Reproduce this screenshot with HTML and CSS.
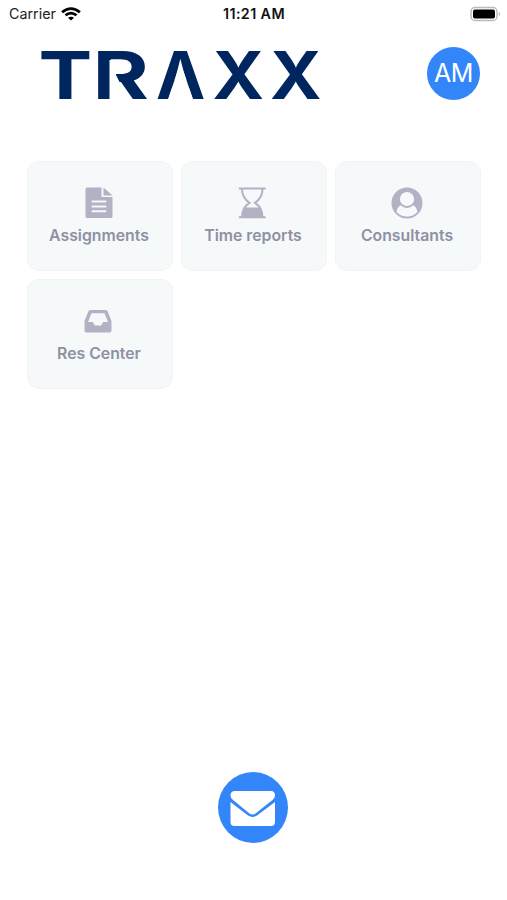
FILE: index.html
```
<!DOCTYPE html>
<html lang="en">
<head>
    <meta charset="UTF-8">
    <meta name="viewport" content="width=device-width, initial-scale=1.0">
    <title>TRAXX</title>
    <link rel="stylesheet" href="styles.css">
</head>
<body>
    <div class="status-bar">
        <div class="carrier">
            <span>Carrier</span>
            <svg width="20" height="14" viewBox="0 0 18 14" preserveAspectRatio="none" fill="none" stroke="#000" stroke-width="2.5">
                <path d="M1 5.2Q9-2 17 5.2"/>
                <path d="M4 8.3Q9 4 14 8.3"/>
                <path d="M9 13.6 6.3 10.8Q9 8.5 11.7 10.8Z" fill="#000" stroke="none"/>
            </svg>
        </div>
        <div class="clock">11:21 AM</div>
        <svg class="battery" width="32" height="16" viewBox="0 0 32 16">
            <rect x="1" y="1.5" width="26" height="13" rx="4" fill="#fff" stroke="#bbb" stroke-width="1.5"/>
            <rect x="3" y="3.5" width="22" height="9" rx="2" fill="#000"/>
            <path d="M28.8 5.5Q31 8 28.8 10.5Z" fill="#aaa"/>
        </svg>
    </div>

    <header>
        <svg class="logo" width="282" height="56" viewBox="0 0 282 56">
            <g class="logo-text">
                <text transform="translate(-1.500 54) scale(1.220 1)">T</text>
                <text transform="translate(52.500 54) scale(1.300 1)">R</text>
                <text x="116" y="54">A</text>
                <text transform="translate(172.500 54) scale(1.060 1)">X</text>
                <text transform="translate(230 54) scale(1.060 1)">X</text>
            </g>
            <!-- open the crossbar of the A and the joint of the R -->
            <path d="M140.500 18 153.300 55H127.700Z" fill="#fff"/>
            <path d="M69.500 15H76V30L80 38V55H69.500Z" fill="#fff"/>
        </svg>
        <div class="avatar">AM</div>
    </header>

    <main class="tiles">
        <a class="tile">
            <svg width="32" height="32" viewBox="0 0 32 32" fill="#b1b2c3">
                <path d="M4 .5H18.500V10H29.500V29.500Q29.500 31 28 31H4Q2.500 31 2.500 29.500V2Q2.500 .5 4 .5Z"/>
                <path d="M20.500 .5 29.500 8.500H20.500Z"/>
                <path d="M9.500 14.500H22.500M9.500 19.500H22.500M9.500 24.300H22.500" stroke="#f6f9fb" stroke-width="2" stroke-linecap="round"/>
            </svg>
            <span>Assignments</span>
        </a>
        <a class="tile">
            <svg width="32" height="32" viewBox="0 0 32 32" fill="none" stroke="#b1b2c3" stroke-width="2">
                <path d="M1.800 1.500H28.700M1.800 30.200H28.700"/>
                <path d="M5 2C5 9 7.500 12.500 12.500 15.800C7.500 19 5 22.500 5 30M25.500 2C25.500 9 23 12.500 18 15.800C23 19 25.500 22.500 25.500 30"/>
                <path d="M7.500 20.500H23Q25.500 24 25.500 30H5Q5 24 7.500 20.500Z" fill="#b1b2c3" stroke="none"/>
            </svg>
            <span>Time reports</span>
        </a>
        <a class="tile">
            <svg width="32" height="32" viewBox="0 0 32 32">
                <circle cx="16" cy="16" r="15.500" fill="#b1b2c3"/>
                <path d="M5.500 25C6.500 19.500 9.500 17.800 12.500 17.800Q16 19.500 19.500 17.800C22.500 17.800 25.500 19.500 26.500 25Q22 29.500 16 29.500T5.500 25Z" fill="#f6f9fb"/>
                <circle cx="16" cy="12" r="8" fill="#f6f9fb" stroke="#b1b2c3" stroke-width="1.800"/>
            </svg>
            <span>Consultants</span>
        </a>
        <a class="tile">
            <svg width="32" height="32" viewBox="0 0 32 32" fill="#b1b2c3">
                <path fill-rule="evenodd" d="M7.500 5H22.500Q24 5 24.700 6.500L28.500 16V25.500Q28.500 27.500 26.500 27.500H3.500Q1.500 27.500 1.500 25.500V16L5.300 6.500Q6 5 7.500 5ZM8.500 8.300 5 17H9.800L11.800 20.500H18.200L20.200 17H25L21.500 8.300Z"/>
            </svg>
            <span>Res Center</span>
        </a>
    </main>

    <footer>
        <button class="mail-btn" aria-label="Messages">
            <svg width="46" height="36" viewBox="0 0 46 36" fill="#fff">
                <path d="M5 0H41Q45 0 45 4.500Q45 7 42.500 9L25.500 22.500Q22.500 24.300 19.500 22.500L3 9Q.5 7 .5 4.500Q.5 0 5 0Z"/>
                <path d="M.5 11 18 24.500Q22.500 27.300 27 24.500L45 11V31Q45 35 41 35H4.500Q.5 35 .5 31Z"/>
            </svg>
        </button>
    </footer>
</body>
</html>
```
FILE: styles.css
```
* {
    box-sizing: border-box;
}

body {
    font-family: 'Inter', sans-serif;
    background-color: #fff;
    margin: 0;
    height: 900px;
    display: flex;
    flex-direction: column;
}

.status-bar {
    display: grid;
    grid-template-columns: 1fr auto 1fr;
    align-items: center;
    height: 27px;
    padding: 0 5px 0 9px;
    font-size: 14.3px;
    color: #222;
}

.carrier {
    display: flex;
    align-items: center;
    gap: 5px;
}

.clock {
    font-weight: 600;
    letter-spacing: 0.4px;
    padding-right: 3px;
    color: #111;
}

.battery {
    justify-self: end;
}

header {
    display: flex;
    justify-content: space-between;
    align-items: center;
    height: 92px;
    padding: 0 27px 0 40px;
}

.logo {
    overflow: visible;
}

.logo-text {
    font-size: 66px;
    font-weight: 700;
    fill: #002660;
}

.avatar {
    width: 53px;
    height: 53px;
    border-radius: 50%;
    background-color: #3386fa;
    color: white;
    font-size: 25px;
    letter-spacing: -0.5px;
    line-height: 52px;
    text-align: center;
}

.tiles {
    display: grid;
    grid-template-columns: repeat(3, 146px);
    grid-auto-rows: 110px;
    gap: 8px;
    padding: 42px 27px 0;
}

.tile {
    display: flex;
    flex-direction: column;
    align-items: center;
    padding: 25px 2px 0 0;
    border: 1px solid #f0f4f6;
    border-radius: 12px;
    background-color: #f5f9fa;
    color: #8f90a3;
    font-size: 15.8px;
    font-weight: 600;
    line-height: 20px;
}

.tile span {
    margin-top: 7px;
}

footer {
    margin-top: auto;
    padding: 0 1px 57px 0;
    text-align: center;
}

.mail-btn {
    display: inline-flex;
    align-items: center;
    justify-content: center;
    width: 70px;
    height: 71px;
    padding: 2px 0 0;
    border: none;
    border-radius: 50%;
    background-color: #3386fa;
    cursor: pointer;
}
```
